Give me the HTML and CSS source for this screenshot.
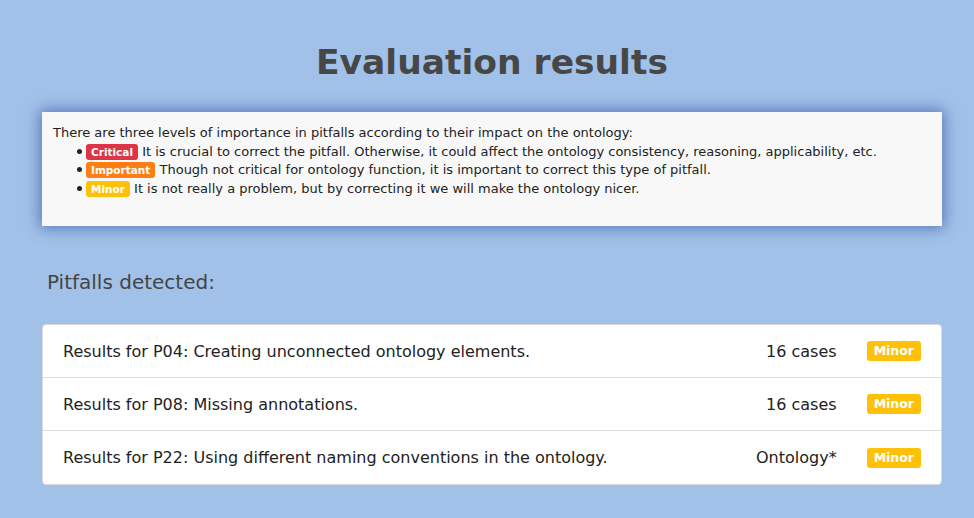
FILE: index.html
```html
<!DOCTYPE html>
<html>
<head>
<meta charset="utf-8">
<link rel="stylesheet" href="styles.css">
</head>
<body>
<div class="page">
  <h1 class="title">Evaluation results</h1>
  <div class="info">
    <p class="intro">There are three levels of importance in pitfalls according to their impact on the ontology:</p>
    <ul class="levels">
      <li><span class="badge critical">Critical</span> It is crucial to correct the pitfall. Otherwise, it could affect the ontology consistency, reasoning, applicability, etc.</li>
      <li><span class="badge important">Important</span> Though not critical for ontology function, it is important to correct this type of pitfall.</li>
      <li><span class="badge minor">Minor</span> It is not really a problem, but by correcting it we will make the ontology nicer.</li>
    </ul>
  </div>
  <h2 class="subtitle">Pitfalls detected:</h2>
  <div class="results">
    <div class="row">
      <span class="name">Results for P04: Creating unconnected ontology elements.</span>
      <span class="count">16 cases</span>
      <span class="badge big minor">Minor</span>
    </div>
    <div class="row">
      <span class="name">Results for P08: Missing annotations.</span>
      <span class="count">16 cases</span>
      <span class="badge big minor">Minor</span>
    </div>
    <div class="row">
      <span class="name">Results for P22: Using different naming conventions in the ontology.</span>
      <span class="count">Ontology*</span>
      <span class="badge big minor">Minor</span>
    </div>
  </div>
</div>
</body>
</html>
```

FILE: styles.css
```css
html, body {
  margin: 0;
  padding: 0;
}
body {
  background: #a1c1e8;
  font-family: "DejaVu Sans", Verdana, sans-serif;
  color: #222;
}
.page {
  width: 900px;
  margin: 0 0 0 42px;
  padding-top: 41px;
}
.title {
  margin: 0 0 29px;
  text-align: center;
  font-size: 34.5px;
  font-weight: bold;
  color: #474747;
  line-height: 42px;
}
.info {
  background: #f8f8f8;
  box-shadow: 0 0 14px 2px #5576bb;
  padding: 12px 11px 28px;
  font-size: 13px;
  line-height: 18.5px;
  color: #222;
}
.intro {
  margin: 0;
}
.levels {
  margin: 0;
  padding: 0 0 0 33px;
  list-style: none;
}
.levels li::before {
  content: "";
  display: inline-block;
  width: 5px;
  height: 5px;
  border-radius: 50%;
  background: #222;
  margin-left: -9px;
  margin-right: 4px;
  vertical-align: 2px;
}
.badge {
  display: inline-block;
  color: #fff;
  font-weight: bold;
  font-size: 10.5px;
  line-height: 16px;
  padding: 0 5px;
  border-radius: 3px;
}
.critical { background: #dc3545; }
.important { background: #fd7e14; }
.minor { background: #ffc107; }
.subtitle {
  margin: 42px 0 0 5px;
  font-size: 20px;
  font-weight: normal;
  color: #444;
  line-height: 28px;
}
.results {
  margin-top: 28px;
  background: #fff;
  border: 1px solid #d8d8d8;
  border-radius: 4px;
}
.row {
  display: flex;
  align-items: center;
  height: 52px;
  padding: 0 20px;
  border-top: 1px solid #ddd;
  font-size: 16px;
  color: #222;
}
.row:first-child {
  border-top: none;
}
.row:last-child {
  height: 53px;
}
.name {
  flex: 1;
}
.count {
  width: 110px;
  text-align: right;
}
.badge.big {
  margin-left: 30px;
  font-size: 12.5px;
  line-height: 20px;
  padding: 0 7px;
  border-radius: 3px;
}
```
